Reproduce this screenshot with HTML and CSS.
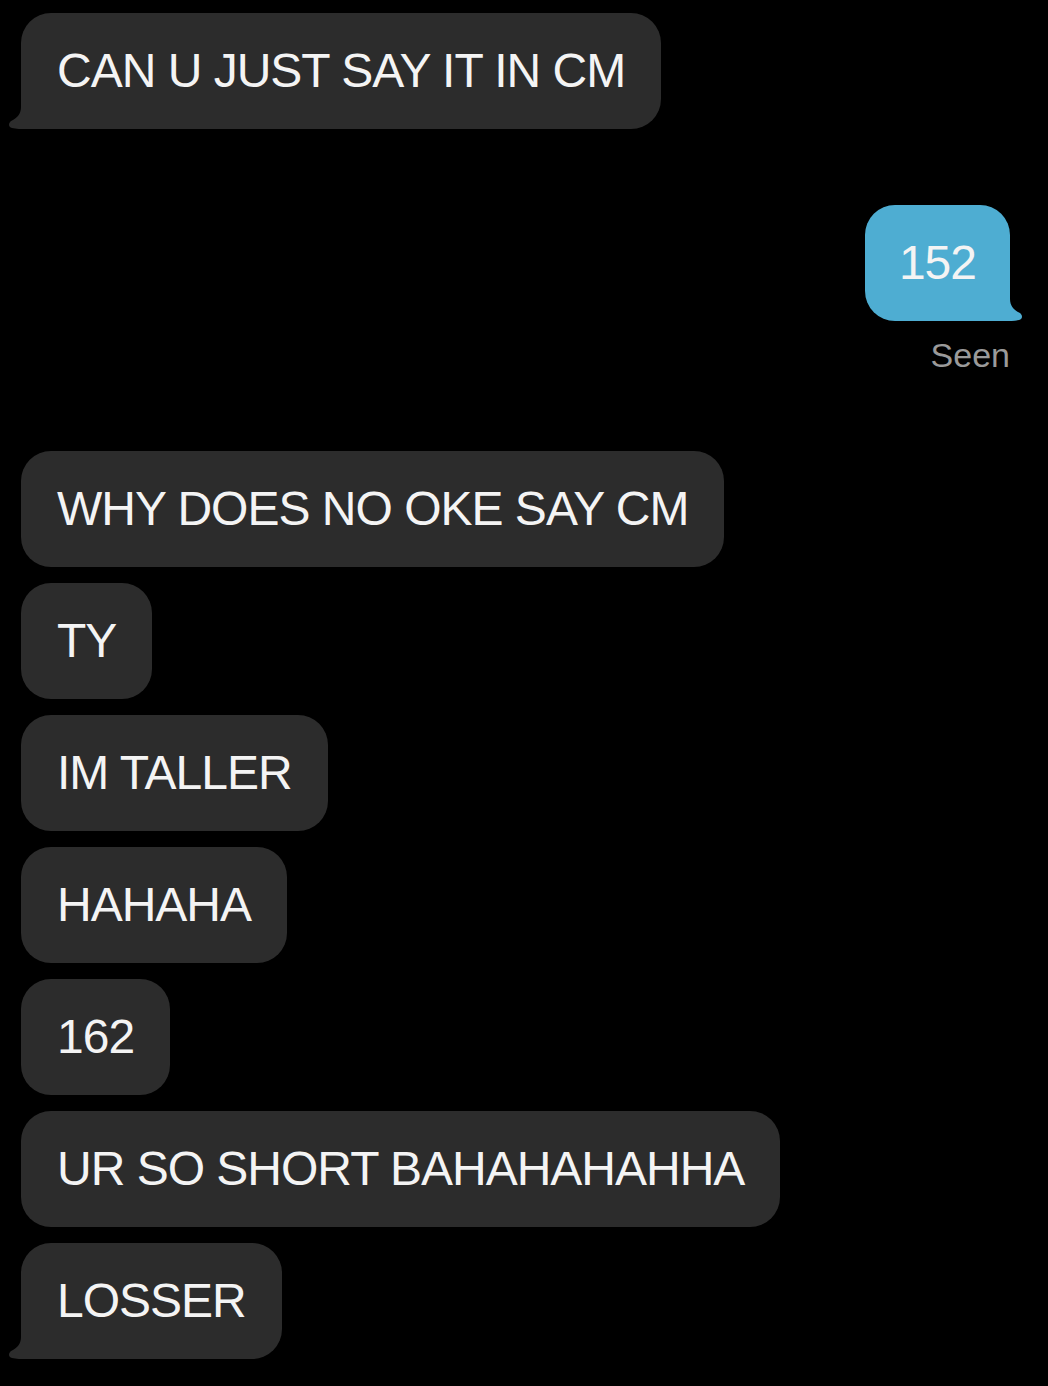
FILE: index.html
```html
<!doctype html>
<html lang="en">
<head>
  <meta charset="UTF-8">
  <title>Messages</title>
  <link rel="stylesheet" href="styles.css">
</head>
<body>
<div class="thread">

  <div class="group in">
    <div class="bubble tail">CAN U JUST SAY IT IN CM
      <svg class="tip" width="30" height="30" viewBox="0 0 30 30"><path d="M14 0 L14 8 C14 15 10 19 5 21.5 C1 23.5 1 28 5 29 C9 30 14 30 20 30 L30 30 L30 0 Z"/></svg>
    </div>
  </div>

  <div class="group out">
    <div class="bubble blue tail">152
      <svg class="tip" width="30" height="30" viewBox="0 0 30 30"><path d="M14 0 L14 8 C14 15 10 19 5 21.5 C1 23.5 1 28 5 29 C9 30 14 30 20 30 L30 30 L30 0 Z"/></svg>
    </div>
    <div class="seen">Seen</div>
  </div>

  <div class="group in">
    <div class="bubble">WHY DOES NO OKE SAY CM</div>
    <div class="bubble">TY</div>
    <div class="bubble">IM TALLER</div>
    <div class="bubble">HAHAHA</div>
    <div class="bubble">162</div>
    <div class="bubble">UR SO SHORT BAHAHAHAHHA</div>
    <div class="bubble tail">LOSSER
      <svg class="tip" width="30" height="30" viewBox="0 0 30 30"><path d="M14 0 L14 8 C14 15 10 19 5 21.5 C1 23.5 1 28 5 29 C9 30 14 30 20 30 L30 30 L30 0 Z"/></svg>
    </div>
  </div>

</div>
</body>
</html>
```

FILE: styles.css
```css
html, body {
  margin: 0;
  background: #000;
}
.thread {
  display: flex;
  flex-direction: column;
  padding: 13px 38px 0 21px;
  font-family: "Liberation Sans", Arial, sans-serif;
}
.group {
  display: flex;
  flex-direction: column;
  gap: 16px;
}
.group.in {
  align-items: flex-start;
}
.group.out {
  align-items: flex-end;
  gap: 14px;
  margin-top: 76px;
}
.group.out + .group {
  margin-top: 76px;
}
.bubble {
  position: relative;
  background: #2c2c2c;
  color: #f4f4f4;
  font-size: 48px;
  letter-spacing: -1px;
  line-height: 56px;
  padding: 30px 36px 30px 36px;
  border-radius: 30px;
  white-space: nowrap;
}
.bubble.blue {
  background: #4eadd2;
  padding: 30px 34px;
}
.bubble.tail {
  border-bottom-left-radius: 0;
}
.bubble.blue.tail {
  border-bottom-left-radius: 30px;
  border-bottom-right-radius: 0;
}
.tip {
  position: absolute;
  left: -14px;
  bottom: 0;
  fill: #2c2c2c;
}
.blue .tip {
  left: auto;
  right: -14px;
  transform: scaleX(-1);
  fill: #4eadd2;
}
.seen {
  color: #9a9a9a;
  font-size: 34px;
  line-height: 40px;
}
```
